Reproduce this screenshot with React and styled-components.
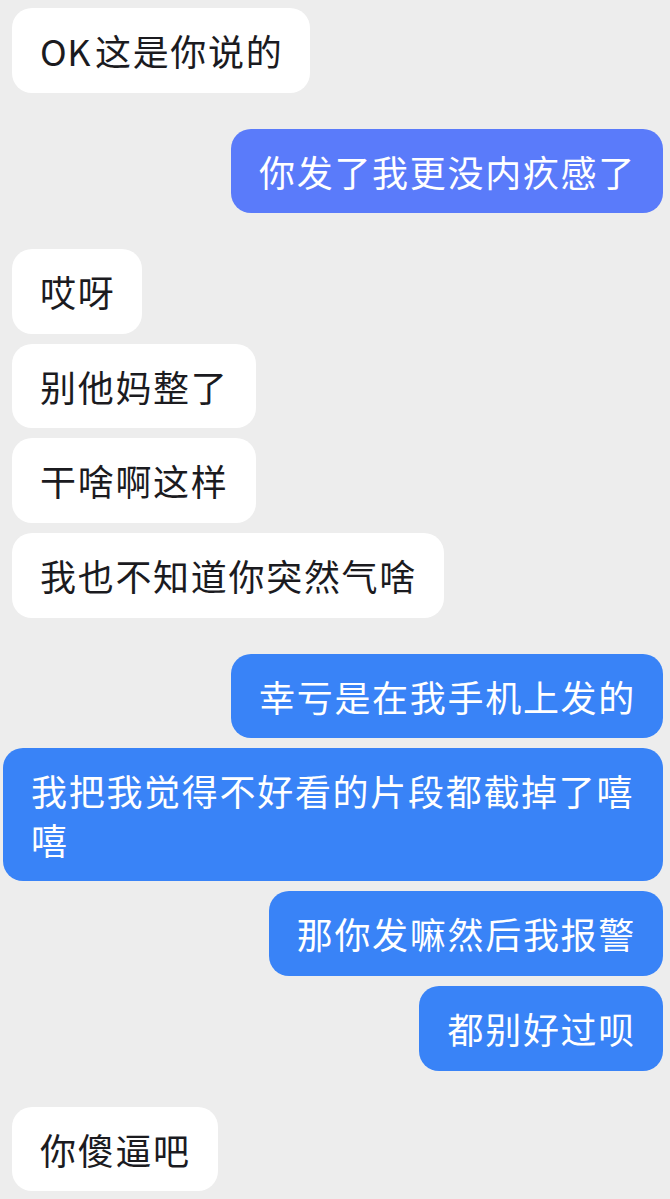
import React from 'react';
import styled, { createGlobalStyle } from 'styled-components';

const GlobalStyle = createGlobalStyle`
  html, body {
    margin: 0;
    padding: 0;
    background: #ededed;
  }
  body {
    font-family: "Noto Sans CJK SC", "Noto Sans", sans-serif;
  }
`;

// Chat screen
const Screen = styled.div`
  width: 670px;
  min-height: 1199px;
  box-sizing: border-box;
  padding: 8px 7px 0 0;
  background: #ededed;
  display: flex;
  flex-direction: column;
  gap: 36px;
`;

const Group = styled.div`
  display: flex;
  flex-direction: column;
  align-items: ${(p) => (p.$mine ? 'flex-end' : 'flex-start')};
  gap: 10px;
  padding-left: ${(p) => (p.$mine ? '3px' : '12px')};
`;

const Bubble = styled.div`
  box-sizing: border-box;
  max-width: 660px;
  padding: 18px 27px 18px 28px;
  border-radius: 20px;
  font-size: 36px;
  line-height: 48.6px;
  letter-spacing: 1.7px;
  font-weight: 400;
  color: ${(p) => (p.$tone ? '#ffffff' : '#1b1b1f')};
  background: ${(p) =>
    p.$tone === 'violet' ? '#5a7bfa' : p.$tone === 'blue' ? '#3983f7' : '#ffffff'};
  word-break: break-all;
`;

const Latin = styled.span`
  letter-spacing: 0.5px;
  margin-right: 4px;
`;

const groups = [
  { mine: false, items: [['OK', '这是你说的']] },
  { mine: true, tone: 'violet', items: ['你发了我更没内疚感了'] },
  { mine: false, items: ['哎呀', '别他妈整了', '干啥啊这样', '我也不知道你突然气啥'] },
  {
    mine: true,
    tone: 'blue',
    items: ['幸亏是在我手机上发的', '我把我觉得不好看的片段都截掉了嘻嘻', '那你发嘛然后我报警', '都别好过呗'],
  },
  { mine: false, items: ['你傻逼吧'] },
];

export default function App() {
  return (
    <>
      <GlobalStyle />
      <Screen>
        {groups.map((g, i) => (
          <Group key={i} $mine={g.mine}>
            {g.items.map((text, j) => (
              <Bubble key={j} $tone={g.tone}>
                {Array.isArray(text) ? (
                  <>
                    <Latin>{text[0]}</Latin>
                    {text[1]}
                  </>
                ) : (
                  text
                )}
              </Bubble>
            ))}
          </Group>
        ))}
      </Screen>
    </>
  );
}
